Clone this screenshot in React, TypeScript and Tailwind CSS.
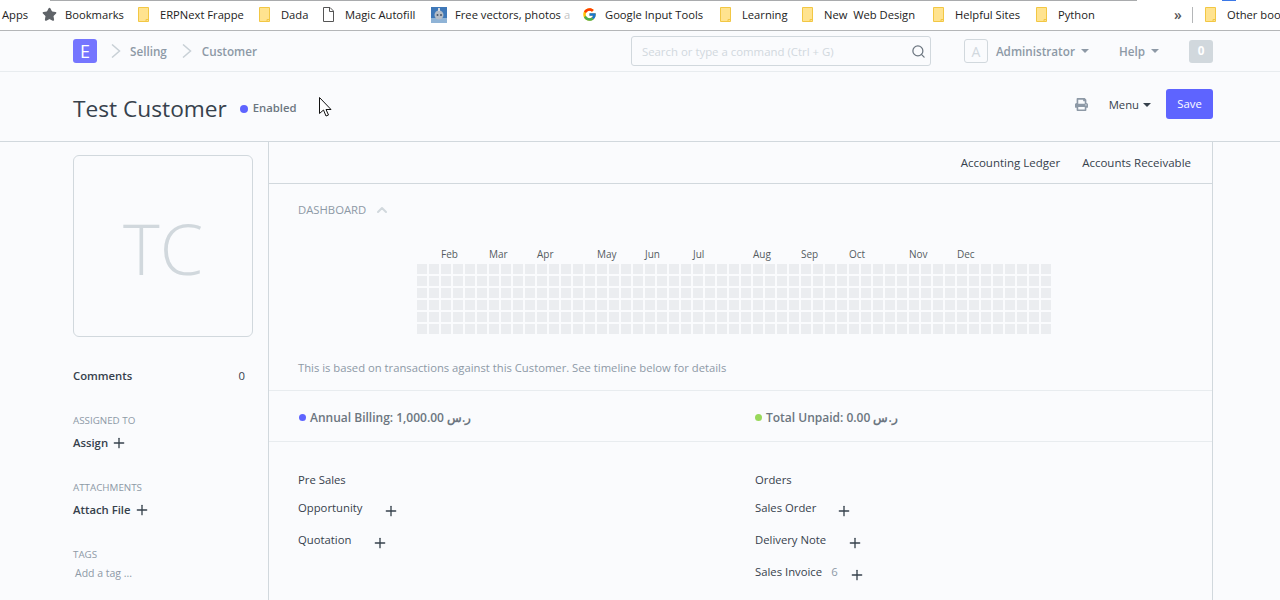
import { ChevronUp, Plus, Search, Star } from 'lucide-react';
import { FaPrint } from 'react-icons/fa';
import { FcGoogle } from 'react-icons/fc';

const weeks = Array.from({ length: 53 });
const days = Array.from({ length: 6 });

const months = [
  { name: 'Feb', span: 4 },
  { name: 'Mar', span: 4 },
  { name: 'Apr', span: 5 },
  { name: 'May', span: 4 },
  { name: 'Jun', span: 4 },
  { name: 'Jul', span: 5 },
  { name: 'Aug', span: 4 },
  { name: 'Sep', span: 4 },
  { name: 'Oct', span: 5 },
  { name: 'Nov', span: 4 },
  { name: 'Dec', span: 4 },
];

function Folder() {
  return (
    <svg width="11" height="15" viewBox="0 0 11 15" className="shrink-0">
      <path d="M.5.5h10v14H.5z" fill="#ffe38f" stroke="#f2c744" />
      <path d="M8 14.5v-2h2.500" fill="none" stroke="#f2c744" />
    </svg>
  );
}

function Doc() {
  return (
    <svg width="11" height="15" viewBox="0 0 11 15" className="shrink-0">
      <path d="M.5.5h6.500l3.500 3.500v10.500H.5z" fill="#fff" stroke="#555" />
      <path d="M6.500.5v4h4" fill="none" stroke="#555" />
    </svg>
  );
}

function VectorIcon() {
  return (
    <svg width="16" height="16" viewBox="0 0 16 16" className="shrink-0">
      <rect width="16" height="16" fill="#3f78b8" />
      <rect y="11" width="16" height="5" fill="#8fb3d6" />
      <circle cx="8" cy="8" r="4.500" fill="#b4bcc6" />
      <rect x="7" y="1" width="2" height="3" fill="#d5dae0" />
      <circle cx="6.500" cy="8" r="1" fill="#4a5666" />
      <circle cx="10" cy="8" r="1" fill="#4a5666" />
    </svg>
  );
}

function Crumb() {
  return (
    <svg width="10" height="14" viewBox="0 0 10 14" className="shrink-0">
      <path d="M1 .5 8.500 7 1 13.500" fill="none" stroke="#c8d0d6" strokeWidth="1.500" />
    </svg>
  );
}

function Bookmark({ icon, label, className }: { icon: React.ReactNode; label: React.ReactNode; className: string }) {
  return (
    <div className={`flex shrink-0 items-center ${className}`}>
      {icon}
      <span className="whitespace-pre pt-px">{label}</span>
    </div>
  );
}

function BookmarksBar() {
  return (
    <div className="relative flex h-[31px] items-center overflow-hidden border-b border-[#b4b6b8] bg-white pl-[2px] text-[11.200px] text-[#222]">
      <div className="absolute left-[50px] top-0 h-px w-[1087px] bg-[#a9abad]" />
      <div className="absolute left-[1222px] top-0 h-px w-[14px] bg-[#3b78e7]" />
      <span className="w-[40px] shrink-0 pt-px">Apps</span>
      <Bookmark className="w-[96px] gap-[8px]" icon={<Star size={15} fill="#5f6368" stroke="#5f6368" className="shrink-0" />} label="Bookmarks" />
      <Bookmark className="w-[121px] gap-[11px]" icon={<Folder />} label="ERPNext Frappe" />
      <Bookmark className="w-[64px] gap-[11px]" icon={<Folder />} label="Dada" />
      <Bookmark className="w-[108px] gap-[11px]" icon={<Doc />} label="Magic Autofill" />
      <Bookmark
        className="w-[151px] gap-[8px]"
        icon={<VectorIcon />}
        label={
          <>
            Free vectors, photos <span className="text-[#c4c4c4]">a</span>
          </>
        }
      />
      <Bookmark className="w-[138px] gap-[8px]" icon={<FcGoogle size={15} className="shrink-0" />} label="Google Input Tools" />
      <Bookmark className="w-[82px] gap-[11px]" icon={<Folder />} label="Learning" />
      <Bookmark className="w-[131px] gap-[11px]" icon={<Folder />} label="New  Web Design" />
      <Bookmark className="w-[103px] gap-[11px]" icon={<Folder />} label="Helpful Sites" />
      <Bookmark className="w-[138px] gap-[11px]" icon={<Folder />} label="Python" />
      <span className="w-[18px] shrink-0 text-[14px] font-semibold leading-none text-[#555]">»</span>
      <div className="mr-[12px] h-[16px] w-px shrink-0 bg-[#b4b6b8]" />
      <Bookmark className="gap-[11px]" icon={<Folder />} label="Other bookmarks" />
    </div>
  );
}

function Caret({ className }: { className: string }) {
  return <span className={`inline-block border-x-[4px] border-t-[4px] border-x-transparent ${className}`} />;
}

function Navbar() {
  return (
    <div className="flex h-[41px] items-center border-b border-[#e8ecef] pl-[73px] pr-[67px] text-[11.700px] font-semibold text-[#8d99a6]">
      <div className="flex h-[24px] w-[24px] items-center justify-center rounded-[3px] bg-[#7575ff] text-[18px] font-medium text-white">E</div>
      <span className="ml-[14px]">
        <Crumb />
      </span>
      <span className="ml-[9px] pt-[2px]">Selling</span>
      <span className="ml-[15px]">
        <Crumb />
      </span>
      <span className="ml-[10px] pt-[2px]">Customer</span>
      <div className="ml-auto flex h-[30px] w-[300px] items-center justify-between rounded-[3px] border border-[#d1d8dd] pl-[10px] pr-[4px] text-[11.400px] font-normal text-[#d1d8dd]">
        <span className="pt-px">Search or type a command (Ctrl + G)</span>
        <Search size={15} className="text-[#6c7680]" />
      </div>
      <div className="ml-[33px] flex h-[24px] w-[24px] items-center justify-center rounded-[3px] border border-[#d1d8dd] text-[14px] font-normal text-[#d1d8dd]">A</div>
      <span className="ml-[8px] pt-[2px]">Administrator</span>
      <Caret className="ml-[6px] border-t-[#8d99a6]" />
      <span className="ml-[30px] pt-[2px]">Help</span>
      <Caret className="ml-[6px] border-t-[#8d99a6]" />
      <div className="ml-[30px] flex h-[23px] w-[24px] items-center justify-center rounded-[3px] bg-[#d1d8dd] font-bold text-white">0</div>
    </div>
  );
}

function PageHead() {
  return (
    <div className="flex h-[70px] items-center border-b border-[#d1d8dd] pl-[73px] pr-[67px]">
      <h1 className="mt-[6px] text-[22.700px] font-medium leading-none text-[#36414c]">Test Customer</h1>
      <span className="ml-[13px] mt-[4px] h-[8px] w-[8px] rounded-full bg-[#5e64ff]" />
      <span className="ml-[5px] mt-[4px] text-[11.300px] font-semibold text-[#6c7680]">Enabled</span>
      <FaPrint size={13} className="ml-auto mb-[4px] text-[#8d99a6]" />
      <span className="ml-[21px] mb-[3px] text-[11.300px] text-[#36414c]">Menu</span>
      <Caret className="ml-[4px] mb-[3px] border-t-[#36414c]" />
      <button className="ml-[15px] mb-[6px] h-[30px] w-[47px] rounded-[3px] bg-[#5e64ff] pt-px text-[11.300px] text-white">Save</button>
    </div>
  );
}

function SideGroup({ label, action, className }: { label: string; action: string; className: string }) {
  return (
    <div className={className}>
      <div className="text-[9.800px] leading-[14px] text-[#8d99a6]">{label}</div>
      <div className="mt-[7px] flex items-center gap-[3px] text-[11.300px] font-semibold leading-[16px] text-[#36414c]">
        {action}
        <Plus size={16} strokeWidth={2} />
      </div>
    </div>
  );
}

function Sidebar() {
  return (
    <div className="w-[268px] shrink-0 pl-[73px] pt-[13px]">
      <div className="flex h-[182px] w-[180px] items-center justify-center rounded-[6px] border border-[#d1d8dd] pt-[4px] text-[70px] font-light text-[#d1d8dd]">TC</div>
      <div className="mt-[31px] flex w-[172px] items-center justify-between text-[11.300px] leading-[16px] text-[#36414c]">
        <span className="font-semibold">Comments</span>
        <span>0</span>
      </div>
      <SideGroup className="mt-[30px]" label="ASSIGNED TO" action="Assign" />
      <SideGroup className="mt-[30px]" label="ATTACHMENTS" action="Attach File" />
      <div className="mt-[30px] text-[9.800px] leading-[14px] text-[#8d99a6]">TAGS</div>
      <div className="mt-[4px] pl-[2px] text-[10.500px] text-[#8d99a6]">Add a tag ...</div>
    </div>
  );
}

function Heatmap() {
  return (
    <div className="ml-[148px] mt-[26px] w-[634px]">
      <div className="flex h-[21px] pl-[24px] text-[10px] leading-[22px] text-[#555b61]">
        {months.map((month) => (
          <span key={month.name} className="shrink-0" style={{ width: month.span * 12 }}>
            {month.name}
          </span>
        ))}
      </div>
      <div className="flex gap-[2px]">
        {weeks.map((_, week) => (
          <div key={week} className="flex flex-col gap-[2px]">
            {days.map((_, day) => (
              <div key={day} className="h-[10px] w-[10px] bg-[#ebedf0]" />
            ))}
          </div>
        ))}
      </div>
    </div>
  );
}

function Stat({ color, label }: { color: string; label: string }) {
  return (
    <div className="flex w-[456px] items-center gap-[4px] text-[12px] font-semibold text-[#6c7680]">
      <span className={`h-[7px] w-[7px] rounded-full ${color}`} />
      <span>{label}</span>
    </div>
  );
}

function DocLink({ label, count, gap }: { label: string; count?: string; gap: string }) {
  return (
    <div className="flex h-[32px] items-center text-[11.300px] text-[#36414c]">
      <span className="mb-[6px]">{label}</span>
      {count && <span className="mb-[6px] ml-[9px] text-[#8d99a6]">{count}</span>}
      <Plus size={16} strokeWidth={2} className={gap} />
    </div>
  );
}

function Main() {
  return (
    <div className="h-[459px] w-[945px] shrink-0 border-x border-[#d1d8dd]">
      <div className="flex h-[42px] items-center justify-end gap-[22px] border-b border-[#d1d8dd] pr-[21px] text-[11.500px] text-[#36414c]">
        <span>Accounting Ledger</span>
        <span>Accounts Receivable</span>
      </div>
      <div className="h-[207px] border-b border-[#e8ecef] pt-[19px]">
        <div className="flex h-[14px] items-center gap-[8px] pl-[29px] text-[11.300px] leading-[14px] text-[#8d99a6]">
          DASHBOARD
          <ChevronUp size={16} strokeWidth={3} className="text-[#d1d8dd]" />
        </div>
        <Heatmap />
        <p className="mt-[26px] pl-[29px] text-[11.250px] leading-[16px] text-[#8d99a6]">
          This is based on transactions against this Customer. See timeline below for details
        </p>
      </div>
      <div className="flex h-[51px] items-center border-b border-[#e8ecef] pl-[30px] pt-[3px]">
        <Stat color="bg-[#5e64ff]" label="Annual Billing: 1,000.00 ر.س" />
        <Stat color="bg-[#98d85b]" label="Total Unpaid: 0.00 ر.س" />
      </div>
      <div className="flex pl-[29px] pt-[30px]">
        <div className="w-[457px]">
          <div className="mb-[7px] text-[11.300px] font-medium leading-[16px] text-[#36414c]">Pre Sales</div>
          <DocLink label="Opportunity" gap="ml-[21px]" />
          <DocLink label="Quotation" gap="ml-[21px]" />
        </div>
        <div>
          <div className="mb-[7px] text-[11.300px] font-medium leading-[16px] text-[#36414c]">Orders</div>
          <DocLink label="Sales Order" gap="ml-[20px]" />
          <DocLink label="Delivery Note" gap="ml-[21px]" />
          <DocLink label="Sales Invoice" count="6" gap="ml-[11px]" />
        </div>
      </div>
    </div>
  );
}

export default function App() {
  return (
    <div className="relative h-[600px] w-[1280px] overflow-hidden bg-[#fafbfd] font-['Open_Sans',sans-serif]">
      <BookmarksBar />
      <Navbar />
      <PageHead />
      <div className="flex">
        <Sidebar />
        <Main />
      </div>
      {/* mouse pointer caught in the capture */}
      <svg width="14" height="21" viewBox="0 0 14 21" className="absolute left-[319px] top-[97px]">
        <path d="M.5.500v16l4-3.500 2.500 6 2.500-1-2.500-5.500h5z" fill="#fff" stroke="#111" />
      </svg>
    </div>
  );
}
